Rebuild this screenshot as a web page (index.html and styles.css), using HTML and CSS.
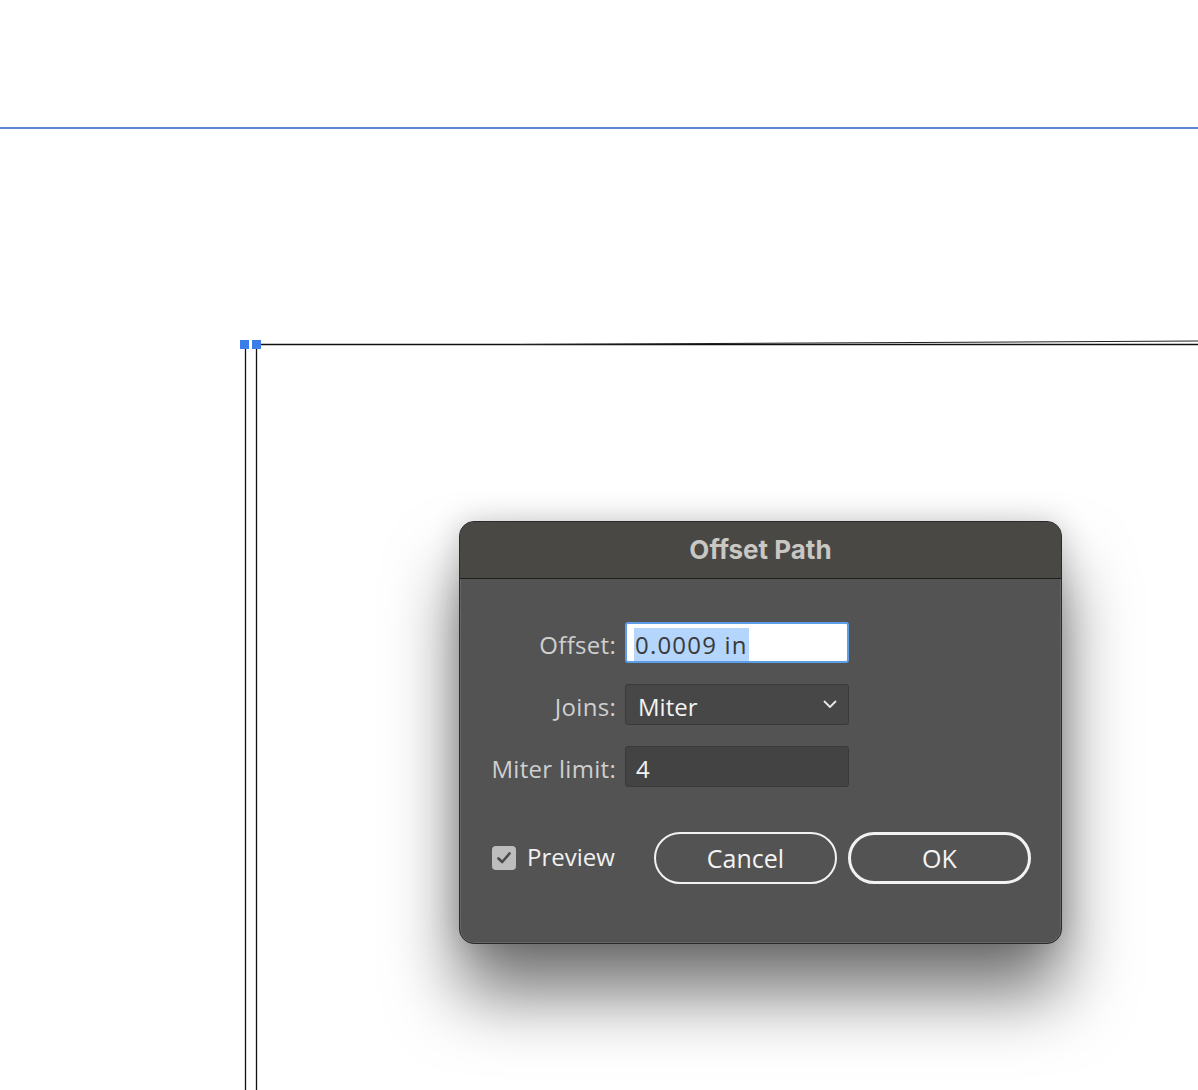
FILE: index.html
```html
<!DOCTYPE html>
<html lang="en">
  <head>
    <meta charset="UTF-8" />
    <title>Offset Path</title>
    <link rel="stylesheet" href="styles.css">
  </head>
  <body>
    <div class="canvas">
      <div class="guide"></div>

      <svg class="artboard" width="1198" height="1090" viewBox="0 0 1198 1090">
        <line x1="245.5" y1="345" x2="245.5" y2="1090" stroke="#111" stroke-width="1.3" />
        <line x1="256.5" y1="345" x2="256.5" y2="1090" stroke="#111" stroke-width="1.3" />
        <line x1="256" y1="344.5" x2="1198" y2="344.5" stroke="#111" stroke-width="1.3" />
        <line x1="520" y1="344.5" x2="1198" y2="341" stroke="#222" stroke-width="1.1" />
        <rect x="240" y="340" width="9" height="9" fill="#3b7ee9" />
        <rect x="252" y="340" width="9" height="9" fill="#3b7ee9" />
      </svg>

      <div class="dialog">
        <div class="dialog-title">Offset Path</div>
        <div class="dialog-body">
          <div class="form">
            <label class="form-label">Offset:</label>
            <div class="field field-active"><span class="selected">0.0009 in</span></div>

            <label class="form-label">Joins:</label>
            <div class="field field-select">
              <span>Miter</span>
              <svg class="chevron" width="14" height="9" viewBox="0 0 14 9">
                <path d="M1.5 1.5 L7 7 L12.5 1.5" fill="none" stroke="#e8e8e8" stroke-width="1.8" stroke-linecap="round" stroke-linejoin="round" />
              </svg>
            </div>

            <label class="form-label">Miter limit:</label>
            <div class="field">4</div>
          </div>

          <div class="actions">
            <div class="preview">
              <span class="checkbox">
                <svg width="16" height="14" viewBox="0 0 16 14">
                  <path d="M2.5 7.5 L6.2 11 L13.5 2.5" fill="none" stroke="#4a4a4a" stroke-width="2.6" stroke-linecap="round" stroke-linejoin="round" />
                </svg>
              </span>
              <span class="preview-text">Preview</span>
            </div>
            <div class="buttons">
              <button class="btn">Cancel</button>
              <button class="btn btn-default">OK</button>
            </div>
          </div>
        </div>
      </div>
    </div>
  </body>
</html>
```

FILE: styles.css
```css
* {
  margin: 0;
  padding: 0;
  box-sizing: border-box;
}

body {
  background: #fff;
  font-family: "Open Sans", Lato, sans-serif;
  overflow: hidden;
}

.canvas {
  position: relative;
  width: 1198px;
  height: 1090px;
  padding-top: 127px;
}

.guide {
  height: 2px;
  background: #5b86d4;
}

.artboard {
  position: absolute;
  left: 0;
  top: 0;
}

.dialog {
  position: absolute;
  left: 459px;
  top: 521px;
  width: 603px;
  height: 423px;
  background: #535353;
  border: 1px solid #2b2b2b;
  border-radius: 15px;
  box-shadow: inset 0 0 0 1px #666, 0 50px 70px rgba(0, 0, 0, 0.55), 0 0 30px rgba(0, 0, 0, 0.18);
  overflow: hidden;
}

.dialog-title {
  height: 57px;
  background: #4a4845;
  border-bottom: 1px solid #1f1f1f;
  color: #c8c7c3;
  font-family: Inter, "Open Sans", sans-serif;
  font-weight: bold;
  font-size: 26px;
  text-align: center;
  line-height: 55px;
}

.dialog-body {
  padding-top: 43px;
}

.form {
  display: grid;
  grid-template-columns: 156px 224px;
  column-gap: 9px;
  row-gap: 21px;
  align-items: center;
}

.form-label {
  text-align: right;
  color: #cfcfcf;
  font-size: 24px;
  font-weight: 500;
  letter-spacing: 0.3px;
  padding-top: 4px;
}

.field {
  height: 41px;
  background: #434343;
  border: 1px solid #3a3a3a;
  border-radius: 3px;
  color: #f2f2f2;
  font-size: 24px;
  font-weight: 500;
  padding: 3px 0 0 10px;
  display: flex;
  align-items: center;
}

.field-active {
  background: #fff;
  border: 2px solid #5c9ee8;
  padding-left: 7px;
  color: #3a3a3a;
  letter-spacing: 1.2px;
}

.selected {
  background: #b4d6fc;
  padding: 0 1px;
}

.field-select {
  background: #474747;
  justify-content: space-between;
  padding-right: 11px;
  padding-left: 12px;
}

.chevron {
  margin-top: -3px;
}

.actions {
  display: flex;
  justify-content: space-between;
  align-items: center;
  padding: 45px 30px 0 32px;
}

.preview {
  display: flex;
  align-items: center;
  gap: 11px;
  color: #f0f0f0;
  font-size: 24px;
  font-weight: 500;
}

.preview-text {
  margin-top: -3px;
}

.checkbox {
  width: 24px;
  height: 24px;
  border-radius: 4px;
  background: #bdbdbd;
  display: flex;
  align-items: center;
  justify-content: center;
}

.buttons {
  display: flex;
  gap: 11px;
}

.btn {
  width: 183px;
  height: 52px;
  border: 2px solid #f2f2f2;
  border-radius: 26px;
  background: transparent;
  color: #f4f4f4;
  font-family: "Open Sans", Lato, sans-serif;
  font-size: 25px;
  font-weight: 500;
}

.btn-default {
  border-width: 3px;
}
```
